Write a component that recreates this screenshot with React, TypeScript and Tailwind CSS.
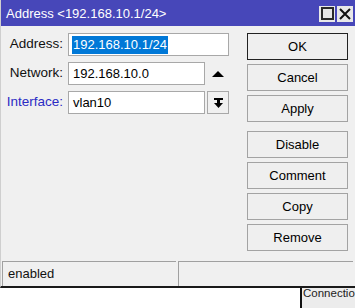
export default function App() {
  const font = { fontFamily: '"Liberation Sans", Arial, sans-serif' };
  const btn =
    "h-[27px] w-[101px] flex items-center justify-center bg-[#efefef] border border-[#a3a3a3] text-[13px] text-black";
  return (
    <div className="w-[355px] h-[308px] bg-white overflow-hidden flex flex-col" style={font}>
      <div className="h-[288px] flex flex-col bg-[#f0f0f0] border-l border-l-[#cfcfcf] border-b-2 border-b-[#1a1a1a]">
        {/* title bar */}
        <div className="h-[26px] shrink-0 bg-[#4747b9] flex items-center pl-[5px] pr-[2px]">
          <span className="text-white text-[13px] leading-none mt-[1px]">Address &lt;192.168.10.1/24&gt;</span>
          <div className="ml-auto flex gap-[2px] mt-[1px]">
            <div className="w-[16px] h-[16px] bg-[#e8e8e8] flex items-center justify-center">
              <div className="w-[13px] h-[13px] border-2 border-[#2a2a2a]" />
            </div>
            <div className="w-[16px] h-[16px] bg-[#e8e8e8] flex items-center justify-center">
              <svg width="14" height="14" viewBox="0 0 14 14">
                <path d="M2 2 L12 12 M12 2 L2 12" stroke="#111" strokeWidth="2" />
              </svg>
            </div>
          </div>
        </div>
        {/* body */}
        <div className="flex flex-1 pt-[7px]">
          <div className="flex flex-col gap-[6px] w-[228px]">
            <div className="flex items-center h-[23px]">
              <div className="w-[62px] text-right text-[13.5px] text-[#111]">Address:</div>
              <div className="ml-[5px] w-[161px] h-[23px] bg-white border border-[#a8a8a8] flex items-center pl-[3px]">
                <span className="bg-[#0078d7] text-white text-[13px] leading-[18px] px-[1px]">192.168.10.1/24</span>
              </div>
            </div>
            <div className="flex items-center h-[23px]">
              <div className="w-[62px] text-right text-[13.5px] text-[#111]">Network:</div>
              <div className="ml-[5px] w-[137px] h-[23px] bg-white border border-[#a8a8a8] flex items-center pl-[4px] text-[13px] text-black">
                192.168.10.0
              </div>
              <div className="flex-1 flex items-center justify-center pl-[1px]">
                <svg width="12" height="6" viewBox="0 0 12 6">
                  <path d="M0 6 L6 0 L12 6 Z" fill="#000" />
                </svg>
              </div>
            </div>
            <div className="flex items-center h-[23px]">
              <div className="w-[62px] text-right text-[13.5px] text-[#2b2bc4]">Interface:</div>
              <div className="ml-[5px] w-[137px] h-[23px] bg-white border border-[#a8a8a8] flex items-center pl-[4px] text-[13px] text-black">
                vlan10
              </div>
              <div className="ml-[2px] w-[22px] h-[23px] bg-[#f0f0f0] border border-[#a8a8a8] flex items-center justify-center">
                <svg width="9" height="10" viewBox="0 0 9 10">
                  <rect x="0" y="0" width="9" height="2" fill="#000" />
                  <rect x="3" y="2" width="3" height="3" fill="#000" />
                  <path d="M0 5 L9 5 L4.5 10 Z" fill="#000" />
                </svg>
              </div>
            </div>
          </div>
          <div className="ml-[18px] flex flex-col">
            <div className="flex flex-col gap-[4px]">
              <div className={btn.replace("border-[#a3a3a3]", "border-[#222]")}>OK</div>
              <div className={btn}>Cancel</div>
              <div className={btn}>Apply</div>
            </div>
            <div className="flex flex-col gap-[4px] mt-[9px]">
              <div className={btn}>Disable</div>
              <div className={btn}>Comment</div>
              <div className={btn}>Copy</div>
              <div className={btn}>Remove</div>
            </div>
          </div>
        </div>
        {/* status bar */}
        <div className="h-[25px] shrink-0 flex gap-[2px] pl-[1px] pr-[2px]">
          <div className="w-[174px] border-t border-l border-[#a0a0a0] flex items-center pl-[5px] text-[13px] text-[#111]">
            enabled
          </div>
          <div className="flex-1 border-t border-l border-[#a0a0a0]" />
        </div>
      </div>
      {/* below window */}
      <div className="flex-1 flex">
        <div className="w-[300px]" />
        <div className="flex-1 border-l-2 border-l-[#111] bg-[#ececec] overflow-hidden">
          <div className="text-[11.5px] text-[#222] leading-[12px] mt-[-1px] pl-[1px] whitespace-nowrap">Connectio</div>
        </div>
      </div>
    </div>
  );
}
